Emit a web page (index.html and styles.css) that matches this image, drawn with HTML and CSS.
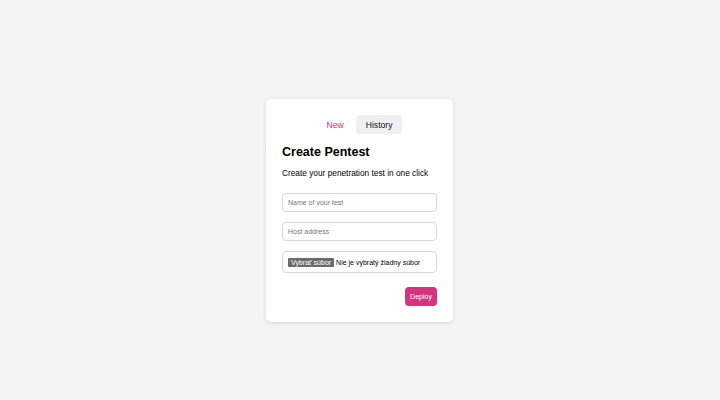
FILE: index.html
```html
<!DOCTYPE html>
<html>
    <head>
        <link rel="stylesheet" href="styles.css">
    </head>
    <body class="back">
        <div class="card">
            <div class="tabs">
                <button type="button" class="tab active">New</button>
                <button type="button" class="tab selected">History</button>
            </div>
            <h1 class="title">Create Pentest</h1>
            <p class="sub">Create your penetration test in one click</p>
            <form class="myform">
                <input type="text" class="field" placeholder="Name of your test">
                <input type="text" class="field" placeholder="Host address">
                <label class="file">
                    <span class="file-btn">Vybrať súbor</span>
                    <span class="file-name">Nie je vybratý žiadny súbor</span>
                </label>
                <div class="actions">
                    <button type="button" class="deploy">Deploy</button>
                </div>
            </form>
        </div>
    </body>
</html>
```

FILE: styles.css
```css
html, body{
    height: 100%;
}

.back{
    margin: 0;
    padding-top: 21px;
    box-sizing: border-box;
    background-color: #f4f4f6;
    font-family: 'Liberation Sans', Arial, sans-serif;
    display: flex;
    align-items: center;
    justify-content: center;
}

.card{
    background-color: white;
    width: 155px;
    padding: 16px;
    margin-right: 1px;
    border-radius: 5px;
    box-shadow: 0 1px 4px rgba(0, 0, 0, 0.12);
}

.tabs{
    display: flex;
    justify-content: center;
    gap: 2px;
}

.tab{
    font-family: inherit;
    font-size: 8.6px;
    height: 19px;
    padding: 0 10px;
    border: none;
    border-radius: 4px;
    background: none;
    color: #111;
}

.active{
    color: #d6337e;
}

.selected{
    background-color: #f0f0f2;
}

.title{
    font-size: 12.5px;
    line-height: 15px;
    margin: 11px 0 0;
    color: #000;
}

.sub{
    font-size: 8.3px;
    line-height: 10px;
    margin: 8px 0 0;
    color: #000;
}

.myform{
    display: flex;
    flex-direction: column;
    gap: 10px;
    margin-top: 15px;
}

.field{
    height: 19px;
    box-sizing: border-box;
    border: 1px solid #d8d8dc;
    border-radius: 4px;
    padding: 0 5px;
    font-family: inherit;
    font-size: 7px;
    outline: none;
}

.field::placeholder{
    color: #777;
}

.file{
    height: 22px;
    box-sizing: border-box;
    border: 1px solid #d8d8dc;
    border-radius: 4px;
    padding: 0 5px;
    display: flex;
    align-items: center;
    gap: 2px;
    font-size: 7px;
    color: #000;
}

.file-btn{
    background-color: #6b6b6b;
    color: white;
    padding: 1px 3px;
    border-radius: 1px;
}

.actions{
    display: flex;
    justify-content: flex-end;
    margin-top: 4px;
}

.deploy{
    background-color: #d6337e;
    color: white;
    border: none;
    border-radius: 4px;
    font-family: inherit;
    font-size: 7px;
    width: 32px;
    height: 19px;
    padding: 0;
}
```
